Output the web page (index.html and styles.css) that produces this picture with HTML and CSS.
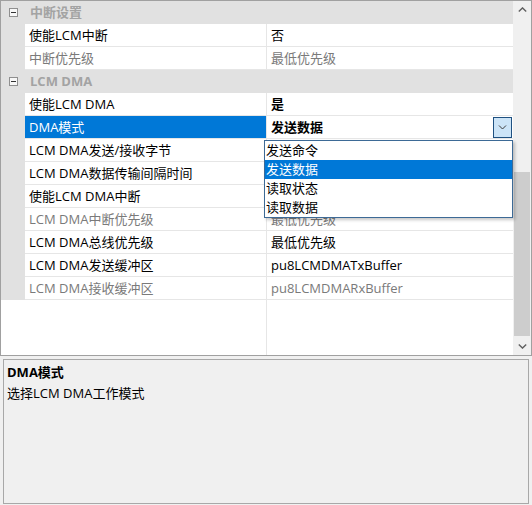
FILE: index.html
```html
<!DOCTYPE html>
<html lang="zh-CN">
<head>
<meta charset="utf-8">
<title>属性</title>
<link rel="stylesheet" href="styles.css">
</head>
<body>
<div class="app">
  <div class="grid">
    <div class="rows-area">
      <div class="rows">
        <div class="row cat"><span class="margin"><span class="toggle"></span></span><span class="cat-label">中断设置</span></div>
        <div class="row"><span class="margin"></span><span class="name">使能LCM中断</span><span class="value">否</span></div>
        <div class="row disabled"><span class="margin"></span><span class="name">中断优先级</span><span class="value">最低优先级</span></div>
        <div class="row cat"><span class="margin"><span class="toggle"></span></span><span class="cat-label">LCM DMA</span></div>
        <div class="row"><span class="margin"></span><span class="name">使能LCM DMA</span><span class="value bold">是</span></div>
        <div class="row selected"><span class="margin"></span><span class="name">DMA模式</span><span class="value editor"><span class="bold">发送数据</span><span class="combo-btn"><svg width="9" height="5" viewBox="0 0 9 5"><path d="M1 0.5 L4.5 4 L8 0.5" fill="none" stroke="#3a3a3a" stroke-width="1"/></svg></span></span></div>
        <div class="row"><span class="margin"></span><span class="name">LCM DMA发送/接收字节</span><span class="value"></span></div>
        <div class="row"><span class="margin"></span><span class="name">LCM DMA数据传输间隔时间</span><span class="value"></span></div>
        <div class="row"><span class="margin"></span><span class="name">使能LCM DMA中断</span><span class="value"></span></div>
        <div class="row disabled"><span class="margin"></span><span class="name">LCM DMA中断优先级</span><span class="value">最低优先级</span></div>
        <div class="row"><span class="margin"></span><span class="name">LCM DMA总线优先级</span><span class="value">最低优先级</span></div>
        <div class="row"><span class="margin"></span><span class="name">LCM DMA发送缓冲区</span><span class="value">pu8LCMDMATxBuffer</span></div>
        <div class="row disabled"><span class="margin"></span><span class="name">LCM DMA接收缓冲区</span><span class="value">pu8LCMDMARxBuffer</span></div>
      </div>
      <div class="filler"><span class="filler-name"></span></div>
      <ul class="dropdown">
        <li>发送命令</li>
        <li class="active">发送数据</li>
        <li>读取状态</li>
        <li>读取数据</li>
      </ul>
    </div>
    <div class="vscroll">
      <div class="sb-btn"><svg width="9" height="5" viewBox="0 0 9 5"><path d="M0.8 4.4 L4.5 0.9 L8.2 4.4" fill="none" stroke="#606060" stroke-width="1.4"/></svg></div>
      <div class="sb-track"><div class="sb-thumb"></div></div>
      <div class="sb-btn"><svg width="9" height="5" viewBox="0 0 9 5"><path d="M0.8 0.6 L4.5 4.1 L8.2 0.6" fill="none" stroke="#606060" stroke-width="1.4"/></svg></div>
    </div>
  </div>
  <div class="desc">
    <div class="desc-title">DMA模式</div>
    <div class="desc-text">选择LCM DMA工作模式</div>
  </div>
</div>
</body>
</html>
```

FILE: styles.css
```css
html, body {
  margin: 0;
  padding: 0;
  background: #f0f0f0;
}

body {
  font-family: "Open Sans", "Noto Sans CJK SC", sans-serif;
  font-size: 13px;
  color: #000;
}

.app {
  width: 532px;
  height: 505px;
  display: flex;
  flex-direction: column;
}

.grid {
  box-sizing: border-box;
  height: 356px;
  border: 1px solid #a0a0a0;
  display: flex;
  background: #fff;
}

.rows-area {
  width: 512px;
  position: relative;
  display: flex;
  flex-direction: column;
}

.rows {
  display: flex;
  flex-direction: column;
}

.row {
  display: flex;
  height: 23px;
  line-height: 22px;
  white-space: nowrap;
}

.margin {
  width: 24px;
  flex: none;
  background: #e1e1e1;
  box-sizing: border-box;
  padding: 7px 0 0 8px;
}

.name {
  box-sizing: border-box;
  width: 242px;
  flex: none;
  padding-left: 4px;
  border-right: 1px solid #e6e6e6;
  border-bottom: 1px solid #e6e6e6;
  overflow: hidden;
}

.value {
  box-sizing: border-box;
  flex: 1;
  padding-left: 4px;
  border-bottom: 1px solid #e6e6e6;
  overflow: hidden;
}

.bold {
  font-weight: bold;
}

.row.cat {
  background: #e1e1e1;
}

.toggle {
  display: block;
  box-sizing: border-box;
  width: 9px;
  height: 9px;
  border: 1px solid #8f8f8f;
  background: #f7f7f7;
  position: relative;
}

.toggle::after {
  content: "";
  position: absolute;
  left: 1px;
  top: 3px;
  width: 5px;
  height: 1px;
  background: #333;
}

.cat-label {
  padding-left: 5px;
  font-weight: bold;
  color: #a3a3a3;
}

.row.disabled .name,
.row.disabled .value {
  color: #7a7a7a;
}

.row.selected .name {
  background: #0078d7;
  color: #fff;
}

.value.editor {
  display: flex;
  align-items: center;
  justify-content: space-between;
  padding-right: 1px;
}

.combo-btn {
  box-sizing: border-box;
  width: 19px;
  height: 21px;
  margin-top: 1px;
  border: 1px solid #1f5181;
  background: #cce4f7;
  display: flex;
  align-items: center;
  justify-content: center;
}

.filler {
  flex: 1;
  display: flex;
}

.filler-name {
  width: 265px;
  border-right: 1px solid #e6e6e6;
}

.dropdown {
  position: absolute;
  left: 263px;
  top: 139px;
  width: 249px;
  box-sizing: border-box;
  margin: 0;
  padding: 0;
  list-style: none;
  background: #fff;
  border: 1px solid #3d6a96;
  box-shadow: 2px 2px 3px rgba(0, 0, 0, 0.22);
}

.dropdown li {
  height: 19px;
  line-height: 19px;
  padding-left: 1px;
  white-space: nowrap;
}

.dropdown li.active {
  background: #0078d7;
  color: #fff;
}

.vscroll {
  width: 18px;
  display: flex;
  flex-direction: column;
  background: #f0f0f0;
}

.sb-btn {
  height: 17px;
  display: flex;
  align-items: center;
  justify-content: center;
}

.sb-track {
  flex: 1;
}

.sb-thumb {
  margin: 154px 1px 0 1px;
  height: 164px;
  background: #cdcdcd;
}

.desc {
  box-sizing: border-box;
  margin: 3px 0 0 3px;
  width: 526px;
  height: 145px;
  border: 1px solid #a8a8a8;
  background: #f0f0f0;
  padding: 2px 3px;
  line-height: 21px;
}

.desc-title {
  font-weight: bold;
}
```
